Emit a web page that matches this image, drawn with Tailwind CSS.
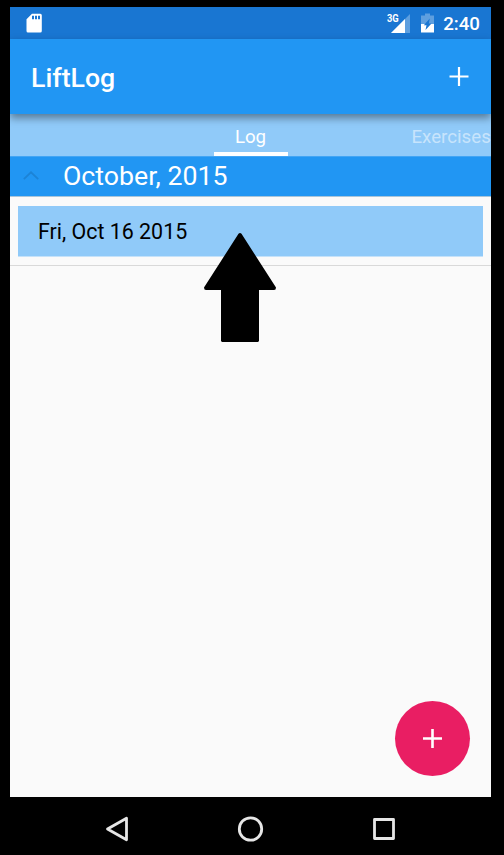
<!DOCTYPE html>
<html lang="en">
<head>
<meta charset="utf-8">
<title>LiftLog</title>
<script src="https://cdn.jsdelivr.net/npm/@tailwindcss/browser@4"></script>
</head>
<body class="bg-black font-[Roboto,sans-serif]">
<div class="w-[504px] h-[855px] overflow-hidden bg-black pt-[7px] pl-[10px]">
  <div class="relative w-[481px] h-[848px] flex flex-col overflow-hidden">
    <!-- Status bar -->
    <div class="h-8 shrink-0 bg-[#1976d2] flex items-center text-white pl-4 pr-[11px]">
      <svg class="w-4 h-5" viewBox="0 0 16 20"><path fill="#fff" fill-rule="evenodd" d="M6 .7h8.300q1.500 0 1.500 1.500v15.800q0 1.500-1.500 1.500H2q-1.500 0-1.500-1.500V6.200zM6 2.700v3.600h2V2.700zM9 2.700v3.600h2V2.700zM12 2.700v3.600h2V2.700z"/></svg>
      <span class="ml-auto self-start mt-[5px] w-[13px] text-[11px] leading-[13px] font-bold origin-left scale-x-[.85]">3G</span>
      <svg class="w-[19px] h-[19px] -ml-[9px]" viewBox="0 0 19 19"><path fill="#fff" fill-opacity=".3" d="M19 0v19H0z"/><path fill="#fff" d="M14 5v14H0z"/></svg>
      <svg class="w-[13px] h-[20px] ml-[11px]" viewBox="0 0 13 20"><path fill="#fff" fill-opacity=".3" d="M4 .5h5v2h4V11H0V2.500h4z"/><path fill="#fff" d="M0 11h13v8.500H0z"/><path fill="#1976d2" d="M8.800 5.500 7.800 10.500h2.700L4.500 17l1-4.700H2.800z"/></svg>
      <span class="ml-[9px] text-[18.700px] leading-8 font-medium pt-[2px]">2:40</span>
    </div>
    <!-- App bar -->
    <div class="relative z-10 h-[75px] shrink-0 bg-[#2196f3] flex items-center justify-between pl-[21px] pr-[22px] shadow-[0_4px_8px_rgba(0,0,0,0.4)]">
      <h1 class="text-white text-[26.700px] leading-8 font-medium pt-[2px]">LiftLog</h1>
      <svg class="w-5 h-5" viewBox="0 0 20 20"><path stroke="#fff" stroke-width="2.200" d="M.5 9.500h19M10 0v19"/></svg>
    </div>
    <!-- Tabs -->
    <div class="h-[42px] shrink-0 bg-[#90caf9] flex text-[18.700px] leading-[22px] overflow-hidden">
      <div class="w-[74px] ml-[204px] pt-[12px] pr-px text-center text-white border-b-4 border-white">Log</div>
      <div class="ml-[123.500px] pt-[12px] text-white/50 whitespace-nowrap">Exercises</div>
    </div>
    <!-- Month group -->
    <div class="h-[41px] shrink-0 bg-[#2196f3] border-t border-t-[#42a5f5] border-b border-b-[#a9c5da] flex items-center">
      <svg class="w-4 h-[9px] ml-[13px] -mt-[2px]" viewBox="0 0 16 9"><path fill="none" stroke="#1c83d6" stroke-width="1.700" d="M.8 8.200 8 1.300l7.200 6.900"/></svg>
      <span class="ml-[24px] pb-[2px] text-[26.700px] leading-8 text-white">October, 2015</span>
    </div>
    <!-- Log entries -->
    <div class="h-[600px] shrink-0 bg-[#fafafa]">
      <div class="h-[69px] border-b border-[#d9d9d9] pt-[9px] px-2">
        <div class="h-[51px] bg-[#90caf9] border-b border-[#c5e2fa] pl-5 text-[21.400px] leading-[52px] text-black">Fri, Oct 16 2015</div>
      </div>
    </div>
    <!-- Navigation bar -->
    <div class="flex-1 bg-black">
      <svg class="w-[481px] h-[58px]" viewBox="0 0 481 58" fill="none" stroke="#e6e6e6" stroke-width="2.800" stroke-linejoin="round"><path d="M116.500 21.200v21.600L97.500 32z"/><circle cx="240.500" cy="32" r="11.200"/><path d="M364.500 22.500h19v19h-19z"/></svg>
    </div>
    <!-- Pointer arrow -->
    <svg class="absolute left-[194px] top-[225px] w-[73px] h-[111px]" viewBox="0 0 73 111"><path fill="#000" d="M34.500 1.800q1.500-1.500 3 0L72 55.500q0 2.500-2 2.500H55v51l-1 1H18l-1-1V58H2q-2 0-2-2.500z"/></svg>
    <!-- Floating action button -->
    <button class="absolute left-[385px] top-[694px] w-[75px] h-[75px] rounded-full bg-[#e91e63] flex items-center justify-center" aria-label="Add">
      <svg class="w-[19px] h-[19px]" viewBox="0 0 19 19"><path stroke="#fff" stroke-width="2.600" d="M0 9.500h19M9.500 0v19"/></svg>
    </button>
  </div>
</div>
</body>
</html>
